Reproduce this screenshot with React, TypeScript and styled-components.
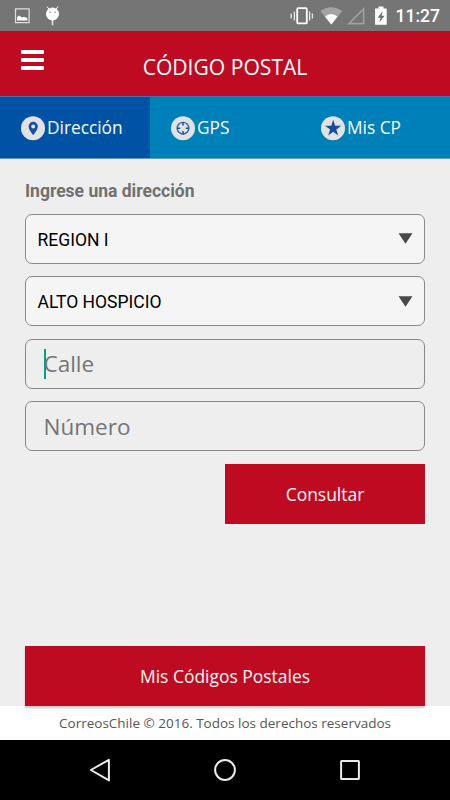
import React from "react";
import styled, { createGlobalStyle } from "styled-components";

const GlobalStyle = createGlobalStyle`
  *, *::before, *::after { box-sizing: border-box; }
  html, body { margin: 0; padding: 0; }
  body { width: 450px; height: 800px; overflow: hidden; background: #eee; }
  button, input { font: inherit; border: 0; padding: 0; margin: 0; background: none; color: inherit; text-align: left; }
  svg { display: block; flex: none; }
`;

const Screen = styled.div`
  display: flex;
  flex-direction: column;
  width: 450px;
  height: 800px;
  background: #eeeeee;
  font-family: "Open Sans", sans-serif;
`;

const StatusBar = styled.div`
  display: flex;
  align-items: center;
  justify-content: space-between;
  height: 31px;
  flex: none;
  padding: 0 10px 0 14px;
  background: #757575;
  color: #fff;
`;

const StatusGroup = styled.div`
  display: flex;
  align-items: center;
`;

const Clock = styled.span`
  margin-left: 7.5px;
  padding-top: 2px;
  font: 500 17.5px/29px Roboto, sans-serif;
`;

const Header = styled.header`
  display: grid;
  grid-template-columns: 65px 1fr 65px;
  height: 65px;
  flex: none;
  background: #bf0b21;
  border-top: 1px solid #c60620;
  color: #fff;
`;

const MenuButton = styled.button`
  display: flex;
  flex-direction: column;
  gap: 4px;
  padding: 18px 0 0 21px;
`;

const MenuBar = styled.span`
  width: 23px;
  height: 4px;
  border-radius: 1px;
  background: #fff;
`;

const Title = styled.h1`
  margin: 0;
  padding-top: 5px;
  text-align: center;
  font-weight: 400;
  font-size: 21.1px;
  line-height: 60px;
  white-space: nowrap;
`;

const Tabs = styled.nav`
  display: grid;
  grid-template-columns: repeat(3, 1fr);
  height: 63px;
  flex: none;
  border-top: 1px solid #4c70a4;
  border-bottom: 1px solid #5f9cbf;
  background: #0080b9;
`;

const Tab = styled.button<{ $active?: boolean }>`
  display: flex;
  align-items: center;
  gap: 2px;
  padding: 1px 0 0 21px;
  background: ${(p) => (p.$active ? "#0053a4" : "transparent")};
  color: #f7fbff;
  font-size: 17.3px;
  line-height: 24px;
  white-space: nowrap;
`;

const Form = styled.form`
  display: flex;
  flex-direction: column;
  padding: 19px 25px 0;
`;

const FormLabel = styled.label`
  height: 36px;
  color: #707070;
  font: 700 17.5px/27px Roboto, sans-serif;
`;

const Field = styled.div<{ $filled?: boolean }>`
  display: flex;
  align-items: center;
  justify-content: space-between;
  height: 49.6px;
  margin-bottom: 12.9px;
  border: 1px solid #888;
  border-radius: 7px;
  background: ${(p) => (p.$filled ? "#f5f5f5" : "#eeeeee")};
  padding: ${(p) => (p.$filled ? "0 11px 0 11.5px" : "0 17.5px")};
`;

const Value = styled.span`
  padding-top: 2.4px;
  color: #000;
  font: 400 17.5px/24px Roboto, sans-serif;
  white-space: nowrap;
`;

const Hint = styled.span`
  position: relative;
  margin-top: 0.8px;
  color: #757575;
  font-size: 22.5px;
  line-height: 30px;
`;

const Caret = styled.i`
  position: absolute;
  left: 0;
  top: 0;
  width: 2px;
  height: 30px;
  background: #0a9c8c;
`;

const RedButton = styled.button<{ $wide?: boolean }>`
  flex: none;
  align-self: ${(p) => (p.$wide ? "center" : "flex-end")};
  width: ${(p) => (p.$wide ? 400 : 200)}px;
  height: 60px;
  background: #bf0b21;
  color: #fff5f5;
  font-size: 17.45px;
  line-height: 60px;
  text-align: center;
  box-shadow: ${(p) => (p.$wide ? "0 2px 2px rgba(0,0,0,.22)" : "none")};
  position: relative;
`;

const Spacer = styled.div`
  flex: 1;
`;

const Footer = styled.footer`
  height: 34px;
  flex: none;
  background: #fff;
  color: #555;
  font-size: 13.5px;
  line-height: 34px;
  text-align: center;
  white-space: nowrap;
`;

const NavBar = styled.div`
  display: flex;
  align-items: center;
  justify-content: space-between;
  height: 60px;
  flex: none;
  padding: 0 88px;
  background: #000;
`;

const PictureIcon = () => (
  <svg width="16" height="16" viewBox="0 0 16 16">
    <path fill="none" stroke="#dedede" strokeWidth="1.2" d="M1.5.9h13.6v13.8H1.5z" />
    <path fill="#fff" d="M3 12.6V9.3l2-1.8 3 2 2.2-.8 3.2 1.6v2.3z" />
  </svg>
);

const DroidIcon = () => (
  <svg width="15" height="20" viewBox="0 0 15 20">
    <path stroke="#fff" strokeWidth="1" d="M2 .5l2.2 3M13 .5l-2.2 3" />
    <path stroke="#e4e4e4" strokeWidth="1.6" d="M7.5 14v5.3" />
    <ellipse cx="7.5" cy="8" rx="6.5" ry="6.4" fill="#fff" />
    <circle cx="5" cy="6.2" r=".75" fill="#757575" />
    <circle cx="10" cy="6.2" r=".75" fill="#757575" />
  </svg>
);

const SystemIcons = () => (
  <svg width="98" height="22" viewBox="290 5 98 22">
    <rect x="297.2" y="8.2" width="9.6" height="15.2" rx="1" fill="none" stroke="#fff" strokeWidth="1.8" />
    <path stroke="#e8e8e8" strokeWidth="1.3" d="M294.4 11.5v9M291.2 13.5v5M309.6 11.5v9M312.4 13.5v5" />
    <path fill="#a4a4a4" d="M320.3 11q11-7.6 22 0L331.3 24.5z" />
    <path fill="#fff" d="M325 16.5q6.3-5 12.6 0l-6.3 8z" />
    <path fill="none" stroke="#a0a0a0" strokeWidth="1.6" d="M348.8 23.6h14.8V8.9z" />
    <path fill="#fff" d="M378.5 6.5h5v2h3.2v16.2h-11.6V8.5h3.4z" />
    <path fill="#6d6d6d" d="M382.8 11l-5.2 6.7h3l-1.3 4.8 5.3-6.7h-3z" />
  </svg>
);

const Disc = ({ children }: { children: React.ReactNode }) => (
  <svg width="24" height="25" viewBox="0 0 24 25">
    <circle cx="12" cy="12.2" r="12" fill="#e2e2e2" />
    {children}
  </svg>
);

const PinIcon = () => (
  <Disc>
    <path fill="#164ea1" fillRule="evenodd" d="M12.2 5.8a4.6 4.6 0 0 0-4.6 4.6c0 3.3 4.6 8.6 4.6 8.6s4.6-5.3 4.6-8.6a4.6 4.6 0 0 0-4.6-4.6zm0 2.6a2 2 0 1 1 0 4 2 2 0 0 1 0-4z" />
  </Disc>
);

const TargetIcon = () => (
  <Disc>
    <circle cx="12" cy="12.2" r="5.8" fill="none" stroke="#3569ad" strokeWidth="1.4" />
    <path stroke="#164ea1" strokeWidth="1.5" d="M12 6v3.4M12 15v3.4M5.8 12.2h3.4M14.8 12.2h3.4" />
  </Disc>
);

const StarIcon = () => (
  <Disc>
    <path fill="#124da3" d="M12.2 3.7l1.9 6h6.2l-5 3.7 1.9 6.1-5-3.8-5 3.8 1.9-6.1-5-3.7h6.2z" />
  </Disc>
);

const DownArrow = () => (
  <svg width="15" height="11" viewBox="0 0 15 11">
    <path fill="#484848" d="M.5.3h14L7.5 10.8z" />
  </svg>
);

const BackIcon = () => (
  <svg width="24" height="26" viewBox="0 0 24 26">
    <path fill="none" stroke="#ebebeb" strokeWidth="2" strokeLinejoin="round" d="M20.9 2.8v20.6L2.9 13z" />
  </svg>
);

const HomeIcon = () => (
  <svg width="24" height="24" viewBox="0 0 24 24">
    <circle cx="12" cy="12" r="9.9" fill="none" stroke="#ebebeb" strokeWidth="2" />
  </svg>
);

const RecentIcon = () => (
  <svg width="24" height="24" viewBox="0 0 24 24">
    <rect x="3.1" y="3.1" width="17.8" height="17.8" rx=".5" fill="none" stroke="#ebebeb" strokeWidth="2" />
  </svg>
);

const StatusLeft = styled(StatusGroup)`
  gap: 15px;
  padding-top: 1px;
`;

export default function App() {
  return (
    <>
      <GlobalStyle />
      <Screen>
        <StatusBar>
          <StatusLeft>
            <PictureIcon />
            <DroidIcon />
          </StatusLeft>
          <StatusGroup>
            <SystemIcons />
            <Clock>11:27</Clock>
          </StatusGroup>
        </StatusBar>
        <Header>
          <MenuButton aria-label="Menú">
            <MenuBar />
            <MenuBar />
            <MenuBar />
          </MenuButton>
          <Title>CÓDIGO POSTAL</Title>
        </Header>
        <Tabs>
          <Tab $active>
            <PinIcon />
            <span>Dirección</span>
          </Tab>
          <Tab>
            <TargetIcon />
            <span>GPS</span>
          </Tab>
          <Tab>
            <StarIcon />
            <span>Mis CP</span>
          </Tab>
        </Tabs>
        <Form>
          <FormLabel>Ingrese una dirección</FormLabel>
          <Field $filled>
            <Value>REGION I</Value>
            <DownArrow />
          </Field>
          <Field $filled>
            <Value>ALTO HOSPICIO</Value>
            <DownArrow />
          </Field>
          <Field>
            <Hint>
              <Caret />
              Calle
            </Hint>
          </Field>
          <Field>
            <Hint>Número</Hint>
          </Field>
          <RedButton type="button">Consultar</RedButton>
        </Form>
        <Spacer />
        <RedButton $wide>Mis Códigos Postales</RedButton>
        <Footer>CorreosChile © 2016. Todos los derechos reservados</Footer>
        <NavBar>
          <BackIcon />
          <HomeIcon />
          <RecentIcon />
        </NavBar>
      </Screen>
    </>
  );
}
